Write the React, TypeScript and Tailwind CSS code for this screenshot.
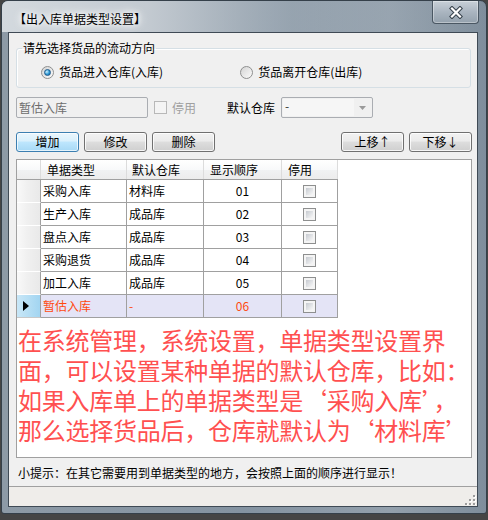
import React from 'react'

const rows = [
  { name: '采购入库', store: '材料库', order: '01' },
  { name: '生产入库', store: '成品库', order: '02' },
  { name: '盘点入库', store: '成品库', order: '03' },
  { name: '采购退货', store: '成品库', order: '04' },
  { name: '加工入库', store: '成品库', order: '05' },
  { name: '暂估入库', store: '-', order: '06', current: true },
]

const btn =
  'flex h-[20px] w-[63px] items-center justify-center rounded-[3px] border border-[#707070] bg-[linear-gradient(#f2f2f2,#ebebeb_45%,#dddddd_50%,#cfcfcf)] text-[12px] leading-none text-black shadow-[inset_0_0_0_1px_rgba(255,255,255,0.8)]'
const btnFocus =
  'flex h-[20px] w-[63px] items-center justify-center rounded-[3px] border border-[#3c7fb1] bg-[linear-gradient(#eaf6fd,#d9f0fc_45%,#bee6fd_50%,#a7d9f5)] text-[12px] leading-none text-black shadow-[inset_0_0_0_1px_rgba(255,255,255,0.7)]'

const Radio = ({ checked }: { checked?: boolean }) => (
  <span className="flex h-[13px] w-[13px] shrink-0 items-center justify-center rounded-full border border-[#8e8f8f] bg-[linear-gradient(135deg,#d4d4d4,#fbfbfb)]">
    {checked && (
      <span className="h-[7px] w-[7px] rounded-full border border-[#1d5a8c] bg-[radial-gradient(circle_at_35%_35%,#d0f0fd,#2c9ad6_55%,#145f9c)]" />
    )}
  </span>
)

const Check = ({ disabled }: { disabled?: boolean }) =>
  disabled ? (
    <span className="block h-[13px] w-[13px] shrink-0 border border-[#b8b8b8] bg-[#f4f4f4]" />
  ) : (
    <span className="block h-[13px] w-[13px] shrink-0 border border-[#8e8f8f] bg-[#f4f4f4] p-[2px]">
      <span className="block h-full w-full bg-[linear-gradient(135deg,#c6cad0,#f8f8f8)]" />
    </span>
  )

const App = () => {
  return (
    <div className="h-[520px] w-[488px] overflow-hidden bg-[#454545] pl-[1px] font-['Noto_Sans_CJK_SC',sans-serif] text-[12px] text-black">
      <div className="h-[514px] w-[486px] rounded-t-[7px] rounded-b-[3px] border border-[#35404a] bg-[linear-gradient(90deg,#8d9aa6,#8493a1_50%,#93a0ac_80%,#7f8e9c)]">
        {/* title bar */}
        <div className="flex h-[31px] justify-between rounded-t-[6px] bg-[linear-gradient(90deg,#d3d9de,#c3cad1_30%,rgba(170,181,191,0.4)_60%,transparent)]">
          <div className="pl-[12px] pt-[11px] leading-[14px] [text-shadow:0_0_5px_#fff,0_0_9px_#fff,0_0_12px_#fff]">
            【出入库单据类型设置】
          </div>
          <div className="mr-[7px] flex h-[23px] w-[47px] items-center justify-center rounded-b-[4px] border border-t-0 border-[#4a5763] bg-[linear-gradient(#c8d0d8,#aab5c0_50%,#94a1ad)] shadow-[inset_0_0_0_1px_rgba(255,255,255,0.35)]">
            <svg width="16" height="13" viewBox="0 0 16 13">
              <path d="M4 2.5 L12 10.5 M12 2.5 L4 10.5" stroke="#36414b" strokeWidth="4.2" strokeLinecap="square" />
              <path d="M4 2.5 L12 10.5 M12 2.5 L4 10.5" stroke="#ffffff" strokeWidth="2.2" strokeLinecap="square" />
            </svg>
          </div>
        </div>

        {/* client */}
        <div className="ml-[6px] flex w-[470px] flex-col border border-[#3f4a55] bg-[#f0f0f0]">
          <div className="flex flex-col pl-[7px]">
            <fieldset className="mt-[8px] w-[455px] rounded-[3px] border border-[#d5dfe5] px-0 pb-[7px] pt-[9px] shadow-[inset_1px_1px_0_#fff]">
              <legend className="ml-[5px] px-[1px] leading-[14px]">请先选择货品的流动方向</legend>
              <div className="flex h-[16px] items-center">
                <div className="ml-[24px] flex items-center gap-[5px]">
                  <Radio checked />
                  <span className="leading-[16px]">货品进入仓库(入库)</span>
                </div>
                <div className="ml-[77px] flex items-center gap-[5px]">
                  <Radio />
                  <span className="leading-[16px]">货品离开仓库(出库)</span>
                </div>
              </div>
            </fieldset>

            <div className="mt-[9px] flex h-[21px] items-center">
              <div className="flex h-[21px] w-[132px] items-center rounded-[2px] border border-[#aaadb2] pl-[2px] text-[#6d6d6d]">
                暂估入库
              </div>
              <span className="ml-[6px]">
                <Check disabled />
              </span>
              <span className="ml-[5px] text-[#a0a0a0]">停用</span>
              <span className="ml-[31px]">默认仓库</span>
              <div className="ml-[6px] flex h-[21px] w-[92px] items-center rounded-[2px] border border-[#aaadb2] p-[1px]">
                <div className="flex h-full w-[71px] items-start bg-[#f6f6f6] pl-[2px] leading-[14px] text-[#333]">-</div>
                <div className="flex flex-1 items-center justify-center">
                  <svg width="7" height="4" viewBox="0 0 7 4">
                    <path d="M0 0 H7 L3.5 4 Z" fill="#9a9a9a" />
                  </svg>
                </div>
              </div>
            </div>

            <div className="mt-[14px] flex w-[456px] items-center">
              <button className={btnFocus}>增加</button>
              <button className={`${btn} ml-[5px]`}>修改</button>
              <button className={`${btn} ml-[5px]`}>删除</button>
              <button className={`${btn} ml-auto`}>上移↑</button>
              <button className={`${btn} ml-[5px]`}>下移↓</button>
            </div>

            {/* grid */}
            <div className="mt-[7px] h-[299px] w-[456px] overflow-hidden border border-[#a0a0a0] bg-white">
              <div className="flex h-[20px] w-[321px] border-b border-[#a0a0a0] bg-[linear-gradient(#ffffff,#f8f9fa_50%,#f1f2f3_50%,#ececec)]">
                <div className="w-[24px] border-r border-[#dcdcdc]" />
                <div className="w-[86px] border-r border-[#dcdcdc] pl-[6px] leading-[19px]">单据类型</div>
                <div className="w-[77px] border-r border-[#dcdcdc] pl-[5px] leading-[19px]">默认仓库</div>
                <div className="w-[78px] border-r border-[#dcdcdc] pl-[6px] leading-[19px]">显示顺序</div>
                <div className="w-[56px] border-r border-[#dcdcdc] pl-[6px] leading-[19px]">停用</div>
              </div>
              {rows.map((r) => (
                <div
                  key={r.order}
                  className={`flex h-[23px] w-[321px] ${r.current ? 'bg-[#e4e4f6] text-[#ff4a10]' : ''}`}
                >
                  {r.current ? (
                    <div className="flex w-[24px] items-center border-r border-b border-r-[#a0a0a0] border-b-[#c8c8c8] bg-[linear-gradient(90deg,#c9e7f7,#a2d5f1)] pl-[6px]">
                      <svg width="6" height="10" viewBox="0 0 6 10">
                        <path d="M0 0 L6 5 L0 10 Z" fill="#000" />
                      </svg>
                    </div>
                  ) : (
                    <div className="w-[24px] border-r border-b border-r-[#a0a0a0] border-b-[#ffffff] bg-[linear-gradient(90deg,#f9f9f9,#f0f0f0_45%,#e9e9e9)]" />
                  )}
                  <div className="w-[86px] border-r border-b border-[#a0a0a0] pl-[2px] leading-[22px]">{r.name}</div>
                  <div className="w-[77px] border-r border-b border-[#a0a0a0] pl-[2px] leading-[22px]">{r.store}</div>
                  <div className="w-[78px] border-r border-b border-[#a0a0a0] text-center leading-[22px]">{r.order}</div>
                  <div className="flex w-[56px] items-center justify-center border-r border-b border-[#a0a0a0]">
                    <Check />
                  </div>
                </div>
              ))}
              <div className="mt-[7px] pl-[1px] text-[24px] leading-[30px] tracking-[-0.25px] whitespace-nowrap text-[#ff5050]">
                <div>在系统管理，系统设置，单据类型设置界</div>
                <div>面，可以设置某种单据的默认仓库，比如：</div>
                <div>如果入库单上的单据类型是‘采购入库’，</div>
                <div>那么选择货品后，仓库就默认为‘材料库’</div>
              </div>
            </div>

            <div className="mt-[7px] pl-[2px] leading-[16px]">
              小提示：在其它需要用到单据类型的地方，会按照上面的顺序进行显示！
            </div>
          </div>

          {/* status bar */}
          <div className="mt-[5px] flex h-[20px] items-end justify-end border-t border-[#a0a0a0] bg-[#efedea] pb-[1px] pr-[1px]">
            <svg width="12" height="12" viewBox="0 0 12 12">
              <g fill="#ffffff">
                <rect x="10" y="3" width="2" height="2" />
                <rect x="6" y="7" width="2" height="2" />
                <rect x="10" y="7" width="2" height="2" />
                <rect x="2" y="11" width="2" height="1" />
                <rect x="6" y="11" width="2" height="1" />
                <rect x="10" y="11" width="2" height="1" />
              </g>
              <g fill="#9c9c9c">
                <rect x="9" y="2" width="2" height="2" />
                <rect x="5" y="6" width="2" height="2" />
                <rect x="9" y="6" width="2" height="2" />
                <rect x="1" y="10" width="2" height="2" />
                <rect x="5" y="10" width="2" height="2" />
                <rect x="9" y="10" width="2" height="2" />
              </g>
            </svg>
          </div>
        </div>
      </div>
    </div>
  )
}

export default App
